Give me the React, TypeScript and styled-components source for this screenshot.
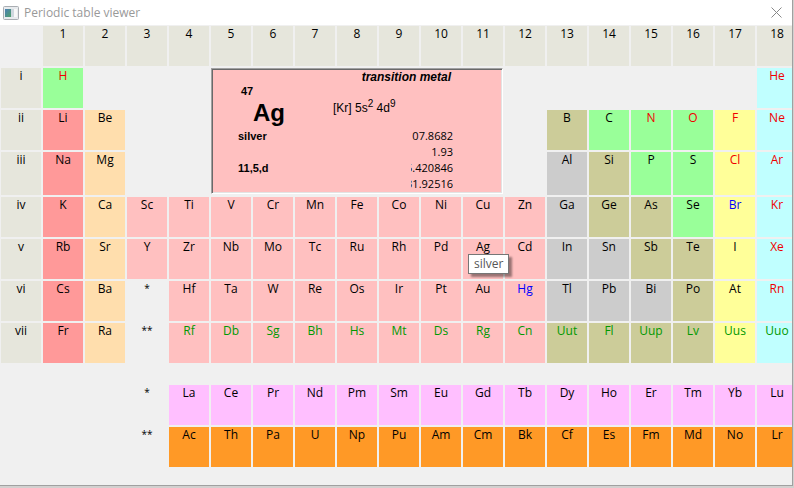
import React from "react";
import styled, { createGlobalStyle, css } from "styled-components";

const GlobalStyle = createGlobalStyle`
  * { box-sizing: border-box; }
  html, body, #root { height: 100%; margin: 0; }
  body {
    background: #d2d0cf;
    color: #000;
    font: 12px/16px "Open Sans", "Noto Sans", sans-serif;
    overflow: hidden;
  }
`;

type Tone = "alkali" | "earth" | "transition" | "metal" | "metalloid" | "nonmetal" | "halogen" | "noble" | "lanthanide" | "actinide";

const tones: Record<Tone, string> = {
  alkali: "#ff9999",
  earth: "#ffdead",
  transition: "#ffc0c0",
  metal: "#cccccc",
  metalloid: "#cccc99",
  nonmetal: "#99ff99",
  halogen: "#ffff99",
  noble: "#c0ffff",
  lanthanide: "#ffbfff",
  actinide: "#ff9926",
};

const Page = styled.div`
  height: 100%;
  padding: 0 1px 2px 0;
`;

const Window = styled.main`
  display: flex;
  flex-direction: column;
  height: 100%;
  overflow: hidden;
  background: #f0f0f0;
  border: solid #a0a0a0;
  border-width: 0 1px 1px 0;
`;

const TitleBar = styled.header`
  display: flex;
  flex: none;
  align-items: center;
  height: 25px;
  padding: 0 10px 0 3px;
  background: #fff;
  color: #999;
`;

const Title = styled.h1`
  flex: 1;
  margin: 0 0 0 5px;
  font-size: 12px;
  font-weight: 400;
`;

const CloseButton = styled.button`
  display: flex;
  padding: 0;
  border: 0;
  background: none;
`;

const Chart = styled.table`
  width: 100%;
  min-width: 800px;
  margin: -1px;
  table-layout: fixed;
  border-collapse: separate;
  border-spacing: 2px;
`;

const Row = styled.tr<{ $height?: number }>`
  height: ${(p) => p.$height ?? 40}px;
`;

const cell = css`
  padding: 0;
  font-weight: 400;
  text-align: center;
  vertical-align: top;
`;

const Heading = styled.th`
  ${cell}
  background: #e6e6dc;
`;

const Blank = styled.td`
  ${cell}
`;

const Marker = styled.span`
  display: block;
  font-size: 10px;
  line-height: 14px;
`;

const Element = styled.td<{ $tone: Tone; $ink: string }>`
  ${cell}
  position: relative;
  background: ${(p) => tones[p.$tone]};
  color: ${(p) => p.$ink};
`;

const Tooltip = styled.span`
  position: absolute;
  z-index: 1;
  top: 15px;
  left: 5px;
  padding: 0 5px;
  border: 1px solid #767676;
  background: #fff;
  box-shadow: 3px 3px 2px rgba(0, 0, 0, 0.4);
  color: #575757;
  line-height: 18px;
`;

const Details = styled.section`
  display: grid;
  grid-template-columns: 120px 1fr;
  height: 126px;
  padding: 1px 49px 0 1px;
  border: 1px solid;
  border-color: #a0a0a0 #fff #fff #a0a0a0;
  box-shadow: inset 1px 1px #696969, inset -1px -1px #e3e3e3;
  background: #ffc0c0;
  font-family: "Liberation Sans", Arial, sans-serif;
  text-align: left;
`;

const Identity = styled.div`
  padding: 14px 0 0 25px;
  font-size: 11px;
  font-weight: 700;
`;

const Line = styled.div<{ $indent?: number; $size?: number; $height?: number }>`
  padding-left: ${(p) => p.$indent ?? 0}px;
  font-size: ${(p) => p.$size ?? 11}px;
  line-height: ${(p) => p.$height ?? 16}px;
`;

const Facts = styled.div`
  display: flex;
  flex-direction: column;
`;

const Category = styled.div`
  padding-right: 2px;
  font-size: 12px;
  font-style: italic;
  font-weight: 700;
  text-align: right;
  line-height: 14px;
`;

const Configuration = styled.div`
  padding: 16px 0 12px;

  sup {
    font-size: 10px;
    line-height: 0;
    vertical-align: 5px;
  }
`;

const Values = styled.div`
  display: flex;
  flex-direction: column;
  align-items: flex-end;
  align-self: flex-end;
  width: 42px;
  overflow: hidden;
  font-family: "Open Sans", "Noto Sans", sans-serif;
  font-size: 11px;
`;

const groups = Array.from({ length: 18 }, (_, i) => i + 1);

const periods = [
  { label: "i", cells: "H . . . . . . He" },
  { label: "ii", cells: "Li Be . . B C N O F Ne" },
  { label: "iii", cells: "Na Mg . . Al Si P S Cl Ar" },
  { label: "iv", cells: "K Ca Sc Ti V Cr Mn Fe Co Ni Cu Zn Ga Ge As Se Br Kr" },
  { label: "v", cells: "Rb Sr Y Zr Nb Mo Tc Ru Rh Pd Ag Cd In Sn Sb Te I Xe" },
  { label: "vi", cells: "Cs Ba * Hf Ta W Re Os Ir Pt Au Hg Tl Pb Bi Po At Rn" },
  { label: "vii", cells: "Fr Ra ** Rf Db Sg Bh Hs Mt Ds Rg Cn Uut Fl Uup Lv Uus Uuo" },
];

const series = [
  { label: "*", cells: "La Ce Pr Nd Pm Sm Eu Gd Tb Dy Ho Er Tm Yb Lu" },
  { label: "**", cells: "Ac Th Pa U Np Pu Am Cm Bk Cf Es Fm Md No Lr" },
];

const members: [Tone, string][] = [
  ["alkali", "Li Na K Rb Cs Fr"],
  ["earth", "Be Mg Ca Sr Ba Ra"],
  ["metal", "Al Ga In Sn Tl Pb Bi"],
  ["metalloid", "B Si Ge As Sb Te Po Uut Fl Uup Lv"],
  ["nonmetal", "H C N O P S Se"],
  ["halogen", "F Cl Br I At Uus"],
  ["noble", "He Ne Ar Kr Xe Rn Uuo"],
  ["lanthanide", series[0].cells],
  ["actinide", series[1].cells],
];

const toneOf = (symbol: string): Tone =>
  members.find(([, list]) => list.split(" ").includes(symbol))?.[0] ?? "transition";

const gases = "H N O F Cl He Ne Ar Kr Xe Rn".split(" ");
const liquids = ["Br", "Hg"];
const synthetic = "Rf Db Sg Bh Hs Mt Ds Rg Cn Uut Fl Uup Lv Uus Uuo".split(" ");

const inkOf = (symbol: string) => {
  if (gases.includes(symbol)) return "#f00000";
  if (liquids.includes(symbol)) return "#0000ff";
  if (synthetic.includes(symbol)) return "#009900";
  return "#000";
};

function Cell({ symbol }: { symbol: string }) {
  if (symbol === ".") return <Blank />;
  if (symbol.startsWith("*")) return <Blank><Marker>{symbol}</Marker></Blank>;
  return (
    <Element $tone={toneOf(symbol)} $ink={inkOf(symbol)}>
      {symbol}
      {symbol === "Ag" && <Tooltip role="tooltip">silver</Tooltip>}
    </Element>
  );
}

function DetailPanel() {
  return (
    <Details aria-label="Selected element">
      <Identity>
        <Line $indent={3} $height={14}>47</Line>
        <Line $indent={15} $size={24} $height={30}>Ag</Line>
        <Line>silver</Line>
        <Line>&nbsp;</Line>
        <Line>11,5,d</Line>
      </Identity>
      <Facts>
        <Category>transition metal</Category>
        <Configuration>[Kr] 5s<sup>2</sup> 4d<sup>9</sup></Configuration>
        <Values>
          <span>107.8682</span>
          <span>1.93</span>
          <span>5.420846</span>
          <span>31.92516</span>
        </Values>
      </Facts>
    </Details>
  );
}

function PeriodRow({ index }: { index: number }) {
  const { label, cells } = periods[index];
  const symbols = cells.split(" ");
  const hasGap = index < 3;
  const lead = index === 0 ? ["H", "."] : symbols.slice(0, 2);
  const tail = index === 0 ? [".", ".", ".", ".", ".", ".", "He"] : [".", ...symbols.slice(4)];
  return (
    <Row $height={index === 2 ? 43 : 40}>
      <Heading scope="row">{label}</Heading>
      {!hasGap && symbols.map((s) => <Cell key={s} symbol={s} />)}
      {hasGap && (
        <>
          {[...lead, ".", "."].map((s, i) => <Cell key={i} symbol={s} />)}
          {index === 0 && <Blank colSpan={7} rowSpan={3}><DetailPanel /></Blank>}
          {tail.map((s, i) => <Cell key={i} symbol={s} />)}
        </>
      )}
    </Row>
  );
}

export default function App() {
  return (
    <Page>
      <GlobalStyle />
      <Window>
        <TitleBar>
          <svg width="16" height="14" viewBox="0 0 16 14" aria-hidden="true">
            <defs>
              <linearGradient id="screen" x1="0" y1="0" x2="1" y2="1">
                <stop offset="0" stopColor="#4b7fb5" />
                <stop offset="1" stopColor="#4fa06a" />
              </linearGradient>
            </defs>
            <rect x="0.5" y="0.5" width="15" height="13" rx="1" fill="#e8ebee" stroke="#a9adb2" />
            <rect x="2" y="3" width="6" height="8" fill="url(#screen)" />
            <rect x="8" y="3" width="3" height="8" fill="#cfd8df" />
            <rect x="11" y="3" width="3" height="8" fill="#f8f8f8" />
          </svg>
          <Title>Periodic table viewer</Title>
          <CloseButton type="button" aria-label="Close">
            <svg width="11" height="11" viewBox="0 0 11 11" stroke="#888" aria-hidden="true">
              <path d="M0.5 0.5L10.5 10.5M10.5 0.5L0.5 10.5" />
            </svg>
          </CloseButton>
        </TitleBar>
        <Chart>
          <thead>
            <Row>
              <Blank />
              {groups.map((g) => <Heading key={g} scope="col">{g}</Heading>)}
            </Row>
          </thead>
          <tbody>
            {periods.map((p, i) => <PeriodRow key={p.label} index={i} />)}
            <Row $height={18}><Blank colSpan={19} /></Row>
            {series.map((s) => (
              <Row key={s.label}>
                <Blank colSpan={3} />
                <Blank as="th" scope="row"><Marker>{s.label}</Marker></Blank>
                {s.cells.split(" ").map((c) => <Cell key={c} symbol={c} />)}
              </Row>
            ))}
          </tbody>
        </Chart>
      </Window>
    </Page>
  );
}
